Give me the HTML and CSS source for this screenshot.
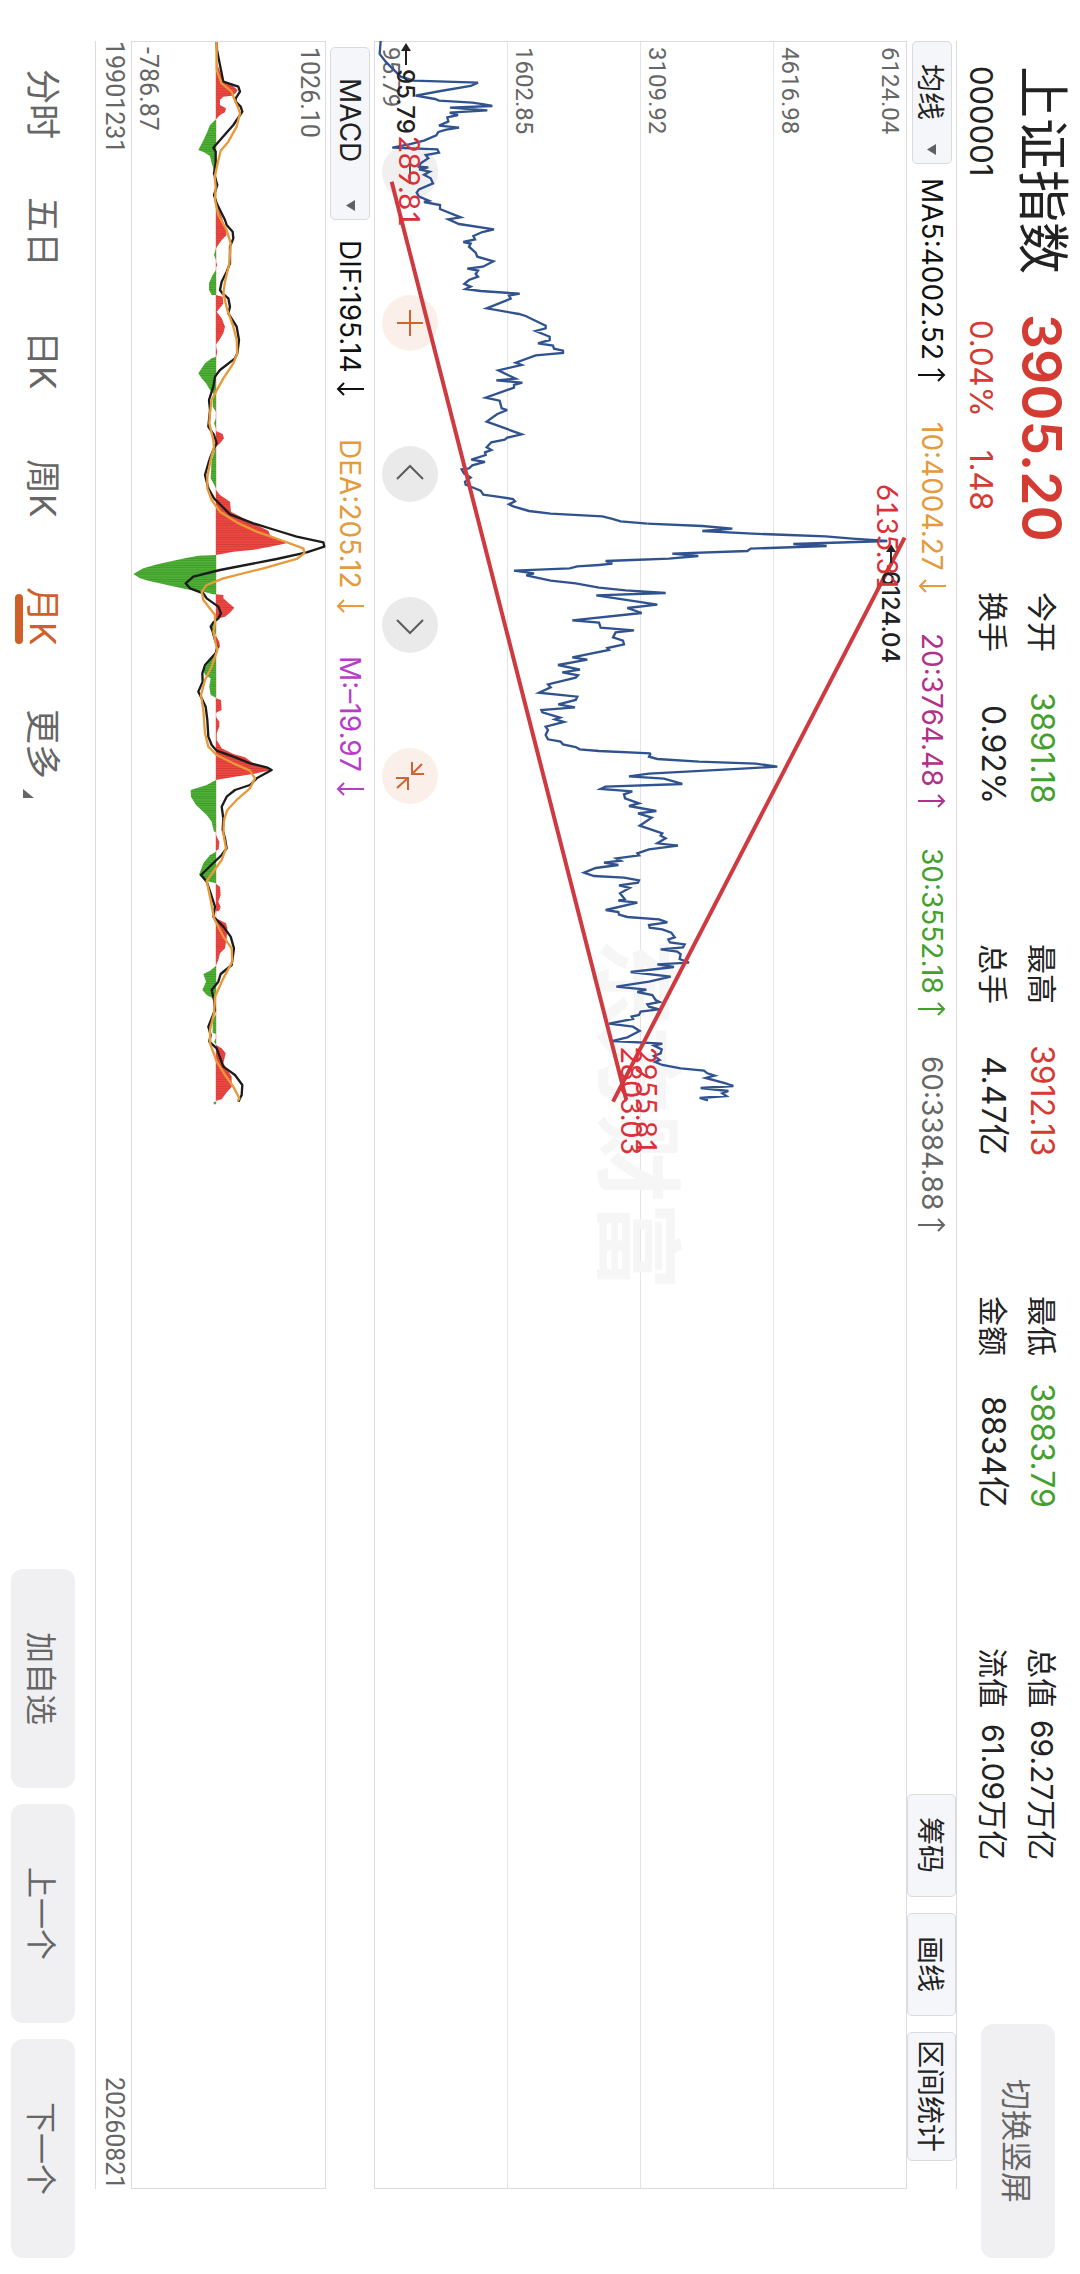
FILE: index.html
```html
<!DOCTYPE html>
<html lang="zh-CN">
<head>
<meta charset="utf-8">
<meta name="viewport" content="width=device-width, initial-scale=1">
<title>上证指数 000001</title>
<link rel="stylesheet" href="styles.css">
</head>
<body>
<div class="screen">
  <header class="header">
    <div class="quote">
      <h1 class="name">上证指数</h1>
      <strong class="price up">3905.20</strong>
      <span class="code">000001</span>
      <span class="change up"><span>0.04%</span><span>1.48</span></span>
    </div>
    <dl class="stats">
      <div class="stat"><dt>今开</dt><dd class="down">3891.18</dd></div>
      <div class="stat"><dt>最高</dt><dd class="up">3912.13</dd></div>
      <div class="stat"><dt>最低</dt><dd class="down">3883.79</dd></div>
      <div class="stat total"><dt>总值</dt><dd>69.27万亿</dd></div>
      <div class="stat"><dt>换手</dt><dd>0.92%</dd></div>
      <div class="stat"><dt>总手</dt><dd>4.47亿</dd></div>
      <div class="stat"><dt>金额</dt><dd>8834亿</dd></div>
      <div class="stat total"><dt>流值</dt><dd>61.09万亿</dd></div>
    </dl>
    <button class="soft-button rotate" type="button">切换竖屏</button>
  </header>

  <svg class="defs" aria-hidden="true">
    <defs>
      <symbol id="arrow-up" viewBox="0 0 28 14"><path d="M0 7h26M20 1l6 6-6 6" fill="none" stroke="currentColor" stroke-width="2"/></symbol>
      <symbol id="arrow-down" viewBox="0 0 28 14"><path d="M28 7H2M8 1L2 7l6 6" fill="none" stroke="currentColor" stroke-width="2"/></symbol>
      <symbol id="caret" viewBox="0 0 10 12"><path d="M10 0v12L0 6z" fill="#5f6063"/></symbol>
    </defs>
  </svg>

  <main class="charts">
    <div class="toolbar main-toolbar">
      <button class="picker" type="button">均线<svg class="caret"><use href="#caret"/></svg></button>
      <ul class="legend">
        <li class="black">MA5:4002.52<svg class="arrow"><use href="#arrow-up"/></svg></li>
        <li class="orange">10:4004.27<svg class="arrow"><use href="#arrow-down"/></svg></li>
        <li class="magenta">20:3764.48<svg class="arrow"><use href="#arrow-up"/></svg></li>
        <li class="green">30:3552.18<svg class="arrow"><use href="#arrow-up"/></svg></li>
        <li class="gray">60:3384.88<svg class="arrow"><use href="#arrow-up"/></svg></li>
      </ul>
      <div class="tools">
        <button class="tool" type="button">筹码</button>
        <button class="tool" type="button">画线</button>
        <button class="tool wide" type="button">区间统计</button>
      </div>
    </div>

    <section class="plot price-plot" aria-label="月K">
      <div class="watermark" aria-hidden="true">东方财富</div>
      <div class="band first"><span>6124.04</span><span>4616.98</span></div>
      <div class="band"><span>3109.92</span></div>
      <div class="band"><span>1602.85</span></div>
      <div class="band last"><span>95.79</span></div>
      <div class="zoom-controls">
        <button class="round faint" type="button" aria-label="缩小"><svg viewBox="0 0 56 56"><path d="M28 16v24"/></svg></button>
        <button class="round accent" type="button" aria-label="放大"><svg viewBox="0 0 56 56"><path d="M15 28h26M28 15v26"/></svg></button>
        <button class="round" type="button" aria-label="左移"><svg viewBox="0 0 56 56"><path d="M15 33l13-13 13 13"/></svg></button>
        <button class="round" type="button" aria-label="右移"><svg viewBox="0 0 56 56"><path d="M15 23l13 13 13-13"/></svg></button>
        <button class="round accent" type="button" aria-label="收起"><svg viewBox="0 0 56 56"><path d="M40 16L30 26M30 14v12h12M15 40l11-10M14 30h12v12"/></svg></button>
      </div>
      <svg class="drawing" viewBox="0 0 532 2148" preserveAspectRatio="xMinYMin meet">
        <!-- series points are value,time pairs at three units per pixel -->
        <g transform="translate(-375 -41) scale(0.33333)">
          <path class="line-price" transform="translate(1080 90)" d="M65 33L62 72 80 95 103 118 125 140 165 152 357 158 335 168 245 183 170 197 228 207 240 212 340 218 375 223 400 228 273 233 385 241 272 248 297 255 265 262 268 275 240 287 300 293 262 299 238 306 232 316 195 332 150 343 100 353 235 358 240 368 200 375 208 385 185 400 180 410 208 412 180 418 212 425 195 434 215 445 222 460 180 478 173 488 180 500 210 512 195 516 243 525 243 537 305 562 268 568 300 582 405 598 370 606 343 618 348 628 313 636 335 641 330 650 350 668 355 680 403 694 372 710 325 716 357 722 350 732 357 740 330 750 316 762 335 770 320 777 365 783 482 791 450 797 455 806 383 835 480 852 500 858 560 887 560 895 530 903 572 920 572 930 537 940 582 947 585 956 612 962 612 969 530 976 470 998 488 1005 418 1021 470 1046 412 1051 490 1058 465 1065 465 1073 380 1103 422 1112 428 1135 445 1140"/>
          <path class="line-price" transform="translate(1080 1200)" d="M445 30L415 42 383 65 488 103 445 113 437 119 397 127 383 142 397 150 378 157 380 165 337 179 378 186 340 196 330 205 308 208 315 220 335 233 318 245 320 254 345 264 365 272 373 284 415 290 462 297 468 304 450 313 465 320 510 333 575 341 730 349 760 357 785 364 865 371"/>
          <path class="line-price" transform="translate(1800 1290)" d="M145 281L310 288 400 296 310 303 460 311 570 315 680 319 760 326 865 333 583 342 683 348 455 356 445 363 220 371 298 378 210 386 100 390 20 393 40 401 0 405"/>
          <path class="line-price" transform="translate(1080 1200)" d="M720 495L655 499 632 505 465 512 525 520 502 526 575 542 650 550 720 563 800 571 920 579 712 586 895 614 805 624 848 639 640 661 720 668 725 683 825 691 770 697 762 712 792 722 795 733 745 744 750 750 640 772 685 779 597 795 663 809 610 817 657 826 650 833 567 853 575 862 540 878 655 890 650 900 598 913 648 922 547 930 550 937 603 953 588 958 615 966 560 980 567 990 560 1005 567 1018 605 1025 612 1033 650 1041 662 1048 720 1053 875 1060"/>
          <path class="line-price" transform="translate(1800 1290)" d="M155 970L150 980 175 987 300 995 470 1001 535 1010 430 1016 150 1031 90 1039 195 1046 250 1062 20 1070 5 1077 100 1084 75 1093 78 1105 120 1120 90 1128 172 1143 117 1150 158 1163 122 1187 190 1210 185 1217 200 1225 175 1240 237 1247"/>
          <path class="line-price" transform="translate(1680 2400)" d="M357 137L270 148 235 160 240 166 172 175 185 182 135 188 178 195 110 204 75 218 105 228 195 233 240 241 237 248 180 256 212 264 183 280 197 297 178 302 235 308 140 330 178 336 180 344 205 351 300 358 325 367 270 375 272 383 310 388 337 398 347 412 328 418 333 427 377 433 372 442 305 448 355 455 365 463 362 477 390 488 295 493 345 501 215 516 335 530 270 545 172 560 262 569 235 576 280 585 290 600 302 606 265 613 270 620 300 628 245 635 240 645 218 650 222 657 150 671 222 680 242 693 205 712 162 723 310 731 285 737 308 748 305 760 285 768 302 780 288 786 310 795 365 805 435 812 445 820 467 827 440 834 500 850 523 858 425 864 508 873 490 880 502 888 422 894 447 901"/>
          <path class="line-trend" d="M1178 545L1882 3300M2717 1613L1842 3305"/>
        </g>
        <g transform="matrix(0 1 -1 0 532 0)">
          <g class="mark-extreme">
            <path d="M24 500H8M506 15h16" fill="none" stroke="#222" stroke-width="2"/>
            <path d="M2 500l8-5v10zM503 15l8-5v10z"/>
            <text x="28" y="509">95.79</text>
            <text x="530" y="24">6124.04</text>
          </g>
          <g class="mark-trend">
            <text x="95" y="507">289.81</text>
            <text x="443" y="29">6135.31</text>
            <text x="1006" y="270">2955.81</text>
            <text x="1006" y="285">2803.03</text>
          </g>
        </g>
      </svg>
    </section>

    <div class="toolbar macd-toolbar">
      <button class="picker macd-picker" type="button">MACD<svg class="caret"><use href="#caret"/></svg></button>
      <ul class="legend">
        <li class="black">DIF:195.14<svg class="arrow"><use href="#arrow-down"/></svg></li>
        <li class="orange">DEA:205.12<svg class="arrow"><use href="#arrow-down"/></svg></li>
        <li class="purple">M:–19.97<svg class="arrow"><use href="#arrow-down"/></svg></li>
      </ul>
    </div>

    <section class="plot macd-plot" aria-label="MACD">
      <div class="macd-axis"><span>1026.10</span><span>-786.87</span></div>
      <svg class="drawing" viewBox="0 0 195 2148" preserveAspectRatio="xMinYMin meet">
        <defs>
          <pattern id="bars-up" width="6" height="7" patternUnits="userSpaceOnUse"><path d="M0 0h6v7H0z" fill="#ee4640"/><path d="M0 0h6v2H0z" fill="#c93a35"/></pattern>
          <pattern id="bars-down" width="6" height="7" patternUnits="userSpaceOnUse"><path d="M0 0h6v7H0z" fill="#4fb036"/><path d="M0 0h6v2H0z" fill="#368f25"/></pattern>
        </defs>
        <g transform="translate(-131 -41) scale(0.33333)">
          <path d="M648 125V3310" stroke="#f0b4b2" stroke-width="3"/>
          <g transform="translate(270 90)">
            <path class="bars-up" d="M378 90L400 155 425 165 443 180 437 190 425 197 400 200 390 210 390 225 408 235 405 247 390 255 378 268zM378 520L395 560 408 600 410 615 395 630 378 655zM378 697L382 705 378 712zM378 795L398 800 400 820 393 830 380 845 395 865 405 890 400 910 388 930 378 943zM378 950L382 965 378 980zM378 1203L398 1212 402 1225 390 1240 378 1250z"/>
            <path class="bars-down" d="M378 268L360 285 350 310 338 335 325 360 342 367 360 378 365 400 372 420 378 440zM378 655L372 675 378 690zM378 720L368 735 357 760 357 780 365 795 378 795zM378 980L365 985 345 1000 325 1030 335 1045 348 1060 360 1080 370 1090 368 1130 378 1145zM378 1165L372 1180 378 1195zM378 1252L365 1290 362 1345 378 1375z"/>
          </g>
          <g transform="translate(270 1380)">
            <path class="bars-up" d="M378 90L390 105 420 125 423 155 480 185 535 212 540 225 590 250 540 260 500 268 430 275 378 285zM378 403L400 405 400 415 415 428 433 443 420 458 405 470 378 477zM378 528L388 545 390 560 378 575zM378 715L393 720 395 750 378 758zM378 770L388 785 388 800 380 820 380 840 395 865 430 882 465 892 490 910 545 930 500 940 435 950 390 958 378 960z"/>
            <path class="bars-down" d="M378 285L325 287 285 295 205 312 160 325 130 342 150 355 175 362 245 378 290 388 340 395 370 403 378 403zM378 477L368 487 362 505 372 515 378 525zM378 583L360 600 340 630 345 645 362 655 358 680 362 705 378 713zM378 960L350 975 302 990 303 1010 318 1035 350 1065 365 1085 372 1115 378 1115z"/>
          </g>
          <g transform="translate(270 2460)">
            <path class="bars-up" d="M378 45L388 65 386 88 378 92zM378 192L390 200 392 225 385 245 392 260 388 272 378 274zM378 295L408 310 412 325 410 355 405 385 390 400 385 420 378 435zM378 675L395 685 407 700 400 730 425 770 425 800 408 820 395 838 378 842z"/>
            <path class="bars-down" d="M378 95L360 105 340 130 327 165 350 183 378 190zM378 438L360 452 340 462 348 485 337 510 350 525 378 540zM378 583L368 600 368 638 378 642zM378 655L372 665 378 673zM378 845L371 847 371 853 378 853z"/>
          </g>
          <g class="line-dif">
            <path transform="translate(270 90)" d="M380 36L381 60 400 155 445 170 450 185 437 205 437 215 452 230 457 245 430 285 370 353 377 365 377 400 372 430 382 465 372 495 380 520 405 570 410 585 428 605 430 625 420 650 420 700 410 725 395 755 390 780 397 790 415 805 420 830 415 850 440 890 447 930 442 970 435 985 390 1020 375 1040 370 1070 357 1110 360 1140 355 1190 372 1215 380 1240 370 1260 358 1290"/>
            <path transform="translate(270 1380)" d="M358 0L345 45 355 85 372 115 392 135 420 163 490 190 565 213 620 230 700 247 703 260 650 277 560 297 390 330 310 350 287 370 300 385 340 400 350 415 385 440 393 460 385 475 370 487 362 500 368 515 375 540 382 560 378 578 345 615 337 640 338 665 325 695 335 715 347 740 352 780 355 830 365 855 380 872 430 890 480 910 530 922 545 930 500 955 480 975 435 990 410 1010 395 1040 400 1075"/>
            <path transform="translate(270 2460)" d="M400 -5L398 30 405 55 410 85 395 105 333 165 350 185 362 220 375 260 370 290 400 320 422 350 432 385 425 435 392 462 385 485 365 510 372 540 375 570 355 620 362 645 358 665 380 685 400 740 435 765 457 795 455 825 445 845"/>
          </g>
          <g class="line-dea">
            <path transform="translate(270 90)" d="M380 36L380 120 395 160 425 185 432 205 445 235 450 250 440 290 415 335 392 362 383 400 374 440 377 470 375 510 385 555 410 600 422 640 418 700 405 755 400 790 412 840 430 890 440 930 442 970 430 1000 400 1045 378 1085 365 1110 360 1150 358 1180 370 1230 372 1250 362 1290"/>
            <path transform="translate(270 1380)" d="M362 0L352 50 352 85 365 120 390 155 440 187 500 215 580 243 640 265 643 280 620 297 520 325 400 355 350 375 335 395 340 420 375 465 375 490 370 515 382 570 365 620 345 660 333 705 340 750 345 820 355 860 380 885 430 910 480 932 495 955 480 985 440 1020 412 1050 402 1080"/>
            <path transform="translate(270 2460)" d="M402 0L400 40 408 85 395 120 350 183 362 240 372 295 400 350 425 385 427 425 400 475 375 530 372 580 360 630 360 670 380 725 405 765 430 800 448 835 443 843"/>
          </g>
        </g>
      </svg>
    </section>

    <div class="dates"><span>19901231</span><span>20260821</span></div>
  </main>

  <footer class="footer">
    <nav class="periods">
      <a href="#">分时</a>
      <a href="#">五日</a>
      <a href="#">日K</a>
      <a href="#">周K</a>
      <a href="#" class="active" aria-current="page">月K</a>
      <a href="#" class="more">更多</a>
    </nav>
    <div class="actions">
      <button class="soft-button" type="button">加自选</button>
      <button class="soft-button" type="button">上一个</button>
      <button class="soft-button" type="button">下一个</button>
    </div>
  </footer>
</div>
</body>
</html>
```
FILE: styles.css
```css
* {
  box-sizing: border-box;
}

body {
  margin: 0;
  background: #fff;
  color: #222;
  font-family: Inter, "Noto Sans CJK SC", sans-serif;
}

ul, dl, dd, h1 {
  margin: 0;
  padding: 0;
  list-style: none;
}

button {
  margin: 0;
  padding: 0;
  border: 0;
  font-family: inherit;
  color: inherit;
  writing-mode: inherit;
  text-orientation: inherit;
  cursor: pointer;
}

/* Landscape view turned a quarter clockwise: lines run downwards,
   rows stack from right to left. Sizes below are logical. */
.screen {
  writing-mode: vertical-rl;
  text-orientation: sideways;
  display: flex;
  flex-direction: column;
  width: 100%;
  height: 100vh;
}

.defs {
  position: absolute;
  width: 0;
  height: 0;
}

.up { color: #d43c33; }
.down { color: #43a02c; }
.black { color: #111; }
.orange { color: #e59a3c; }
.magenta { color: #b0308a; }
.green { color: #43a02c; }
.gray { color: #666; }
.purple { color: #b83cc8; }

/* Header */
.header {
  display: flex;
  align-items: flex-start;
  flex: 0 0 123px;
  padding-inline: 66px 16px;
}

.quote {
  display: grid;
  grid-template-columns: 248px 278px;
  row-gap: 12px;
  padding-block-start: 7px;
  line-height: 36px;
  font-size: 31px;
}

.name {
  font-size: 52px;
  font-weight: 400;
  line-height: 62px;
}

.price {
  font-size: 55px;
  font-weight: 600;
  line-height: 62px;
}

.change {
  display: flex;
  gap: 33px;
  padding-inline-start: 6px;
}

.stats {
  display: grid;
  grid-template-columns: repeat(4, 212px);
  gap: 13px 140px;
  padding-block-start: 20px;
  font-size: 30px;
  line-height: 36px;
}

.stat {
  display: flex;
  justify-content: space-between;
}

.stat dd {
  font-size: 32px;
}

.total dd {
  font-size: 30px;
}

.soft-button {
  border-radius: 12px;
  background: #f0f0f2;
  color: #666;
  font-size: 31px;
}

.rotate {
  inline-size: 234px;
  block-size: 74px;
  margin-block-start: 25px;
  margin-inline-start: auto;
}

/* Charts */
.charts {
  display: flex;
  flex-direction: column;
  flex: 1;
  min-block-size: 0;
  margin-inline: 41px 85px;
}

.toolbar {
  display: flex;
  align-items: center;
  font-size: 28px;
}

.main-toolbar {
  flex: 0 0 50px;
  border-block-start: 1px solid #dcdce0;
}

.macd-toolbar {
  flex: 0 0 48px;
}

.picker {
  display: flex;
  align-items: center;
  justify-content: space-between;
  inline-size: 123px;
  block-size: 40px;
  padding-inline: 22px 8px;
  border: 1px solid #d9dbe0;
  border-radius: 5px;
  background: #f5f6f9;
  font-size: 28px;
}

.macd-picker {
  inline-size: 173px;
  margin-inline-start: 6px;
  padding-inline-start: 30px;
}

.caret {
  width: 9px;
  height: 11px;
}

.legend {
  display: flex;
  gap: 40px;
  margin-inline-start: 14px;
}

.macd-toolbar .legend {
  gap: 43px;
  margin-inline-start: 20px;
}

.legend li {
  display: flex;
  align-items: center;
  gap: 8px;
}

.macd-toolbar li {
  gap: 10px;
}

.arrow {
  width: 28px;
  height: 14px;
}

.tools {
  display: flex;
  align-self: stretch;
  gap: 16px;
  margin-inline: auto 28px;
}

.tool {
  inline-size: 103px;
  border: 1px solid #d9dbe0;
  border-radius: 5px;
  background: #f5f6f9;
  font-size: 28px;
}

.tool.wide {
  inline-size: 129px;
}

.plot {
  position: relative;
  display: flex;
  flex-direction: column;
  border: 1px solid #dcdce0;
  color: #666;
  font-family: Roboto, sans-serif;
  font-size: 24px;
  line-height: 32px;
}

.price-plot {
  flex: 533 1 0;
}

.macd-plot {
  flex: 194 1 0;
}

.band {
  display: flex;
  flex-direction: column;
  justify-content: flex-end;
  flex: 1;
  padding-inline-start: 5px;
  border-block-end: 1px solid #e2e4ea;
}

.band.first {
  justify-content: space-between;
}

.band.last {
  border-block-end: 0;
}

.watermark {
  position: absolute;
  inset-inline-start: 896px;
  inset-block-start: 41%;
  color: #f6f6f6;
  font-family: "Noto Sans CJK SC", sans-serif;
  font-size: 88px;
  font-weight: 700;
  line-height: 88px;
}

.drawing {
  position: absolute;
  inset: -1px;
  width: calc(100% + 2px);
  height: calc(100% + 2px);
  pointer-events: none;
  overflow: hidden;
}

.drawing text {
  writing-mode: horizontal-tb;
}

.line-price {
  fill: none;
  stroke: #30538f;
  stroke-width: 7;
}

.line-trend {
  fill: none;
  stroke: #cf3a40;
  stroke-width: 12;
}

.mark-extreme {
  fill: #222;
  font-family: Inter, sans-serif;
  font-size: 24px;
  font-weight: 500;
}

.mark-trend {
  fill: #dc3038;
  font-family: Lato, sans-serif;
  font-size: 29px;
}

.bars-up { fill: url(#bars-up); }
.bars-down { fill: url(#bars-down); }

.line-dif, .line-dea {
  fill: none;
  stroke-width: 7;
  stroke-linejoin: round;
}

.line-dif { stroke: #1c1c1c; }
.line-dea { stroke: #e8993a; }

.zoom-controls {
  position: absolute;
  inset-inline-start: 102px;
  inset-block-end: 7px;
  display: flex;
  gap: 95px;
}

.round {
  width: 56px;
  height: 56px;
  border-radius: 50%;
  background: #eaeaea;
  color: #5c5c5c;
}

.round.faint { background: #f0f0f0; }

.round.accent {
  background: #fbf0e9;
  color: #cf6433;
}

.round svg {
  display: block;
  width: 56px;
  height: 56px;
  fill: none;
  stroke: currentColor;
  stroke-width: 2;
}

.macd-axis {
  display: flex;
  flex-direction: column;
  justify-content: space-between;
  flex: 1;
  padding-inline-start: 5px;
  font-size: 25px;
}

.dates {
  display: flex;
  justify-content: space-between;
  flex: 0 0 36px;
  border-block-end: 1px solid #dcdce0;
  color: #666;
  font-family: Roboto, sans-serif;
  font-size: 25px;
  line-height: 33px;
}

/* Footer */
.footer {
  display: flex;
  justify-content: space-between;
  flex: 0 0 95px;
  padding-block: 20px 11px;
  padding-inline: 40px 16px;
}

.periods {
  display: grid;
  grid-template-columns: repeat(6, 128px);
  line-height: 64px;
  font-size: 35px;
  text-align: center;
}

.periods a {
  position: relative;
  color: #666;
  text-decoration: none;
}

.periods .active {
  color: #cf6029;
}

.active::after {
  content: "";
  position: absolute;
  inset-inline-start: 42px;
  inset-block-end: 4px;
  inline-size: 50px;
  block-size: 8px;
  border-radius: 4px;
  background: #cf6029;
}

.more::after {
  content: "";
  position: absolute;
  inset-inline-end: 10px;
  inset-block-end: 12px;
  border-top: 9px solid transparent;
  border-left: 11px solid #666;
}

.actions {
  display: flex;
  gap: 16px;
}

.actions .soft-button {
  inline-size: 219px;
}
```
